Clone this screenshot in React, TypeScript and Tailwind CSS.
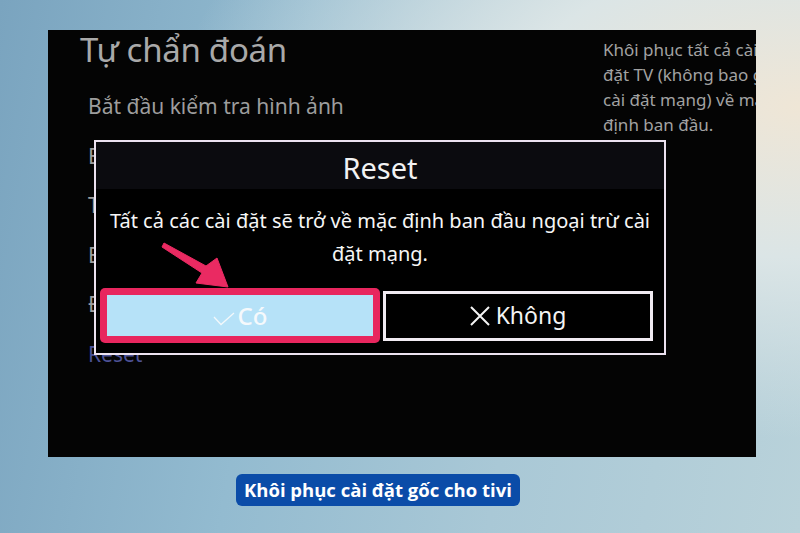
const menuItems = [
  'Bắt đầu kiểm tra âm thanh',
  'Thông tin tín hiệu',
  'Bắt đầu kiểm tra thiết lập tự động',
  'Đặt lại Smart Hub',
];

function PointerArrow() {
  // pink annotation arrow pointing at the "Có" button
  return (
    <svg
      className="absolute left-0 top-0 pointer-events-none"
      width="572"
      height="215"
      viewBox="0 0 572 215"
    >
      <polygon
        points="68,101 110,124 121,116 132,145 100,141 106,131 66,105"
        fill="#ea2a62"
        stroke="#ea2a62"
        strokeWidth="1"
        strokeLinejoin="round"
      />
    </svg>
  );
}

function CheckMark() {
  return (
    <svg width="22" height="14" viewBox="0 0 22 14" fill="none">
      <polyline points="1,5 8,12.5 21,1" stroke="#f3f8fb" strokeWidth="1.3" />
    </svg>
  );
}

function Cross() {
  return (
    <svg width="20" height="20" viewBox="0 0 20 20" fill="none">
      <path d="M1 1 L19 19 M19 1 L1 19" stroke="#f4f4f4" strokeWidth="2" />
    </svg>
  );
}

function ResetDialog() {
  return (
    <div className="absolute left-[46px] top-[110px] w-[572px] h-[215px] border-2 border-[#ece2f0] bg-black flex flex-col">
      <div className="h-[47px] bg-[#0b0b0f] flex items-center justify-center text-[29px] text-[#f2f2f2] leading-none pt-1">
        Reset
      </div>
      <p className="mt-[15px] text-center text-[20px] leading-[33px] text-[#f6f6f6] whitespace-nowrap">
        Tất cả các cài đặt sẽ trở về mặc định ban đầu ngoại trừ cài
        <br />
        đặt mạng.
      </p>
      <div className="mt-auto mb-[10px] flex items-center pl-[4px] pr-[11px] gap-[3px]">
        <div className="w-[280px] h-[55px] rounded-[5px] bg-[#e8265e] p-[7px]">
          <div className="h-full bg-[#b6e2f8] flex items-center justify-center gap-[3px] text-[24px] font-medium text-[#f5f9fc]">
            <span className="pt-[6px]">
              <CheckMark />
            </span>
            <span>Có</span>
          </div>
        </div>
        <div className="flex-1 h-[50px] border-[3px] border-[#f1ebf2] flex items-center justify-center gap-[6px] text-[23px] text-[#f4f4f4]">
          <Cross />
          <span>Không</span>
        </div>
      </div>
      <PointerArrow />
    </div>
  );
}

export default function App() {
  return (
    <div
      className="w-[800px] h-[533px] overflow-hidden flex flex-col items-start pl-[48px] pt-[30px] bg-[radial-gradient(ellipse_at_100%_20%,#efe6d6_0%,#dbe5e6_25%,transparent_55%),linear-gradient(100deg,#7aa4bf_0%,#93bbd0_35%,#a9c8d6_65%,#b9d2da_100%)]"
      style={{ fontFamily: '"Noto Sans", "Open Sans", sans-serif' }}
    >
      <div className="relative w-[708px] h-[427px] bg-[#040404] overflow-hidden">
        <div className="flex">
          <div className="w-[555px] shrink-0 pl-[32px]">
            <div className="text-[33px] leading-[40px] text-[#a9a9a9] tracking-[-0.3px]">Tự chẩn đoán</div>
            <div className="pl-[8px] pt-[12px] flex flex-col">
              <div className="text-[21px] leading-[49.5px] text-[#9d9d9d]">Bắt đầu kiểm tra hình ảnh</div>
              {menuItems.map((item) => (
                <div key={item} className="text-[21px] leading-[49.5px] text-[#9d9d9d]">
                  {item}
                </div>
              ))}
              <div className="text-[21px] leading-[49.5px] text-[#4d5296]">Reset</div>
            </div>
          </div>
          <div className="pt-[7px] text-[17px] leading-[25px] text-[#a2a2a2] whitespace-nowrap">
            <div>Khôi phục tất cả cài</div>
            <div>đặt TV (không bao gồm</div>
            <div>cài đặt mạng) về mặc</div>
            <div>định ban đầu.</div>
          </div>
        </div>
        <ResetDialog />
      </div>
      <div
        className="mt-[17px] ml-[188px] h-[32px] px-[8px] rounded-[6px] bg-[#0b4ca8] flex items-center text-[18.5px] font-bold text-white"
        style={{ fontFamily: '"Open Sans", "Noto Sans", sans-serif' }}
      >
        Khôi phục cài đặt gốc cho tivi
      </div>
    </div>
  );
}
